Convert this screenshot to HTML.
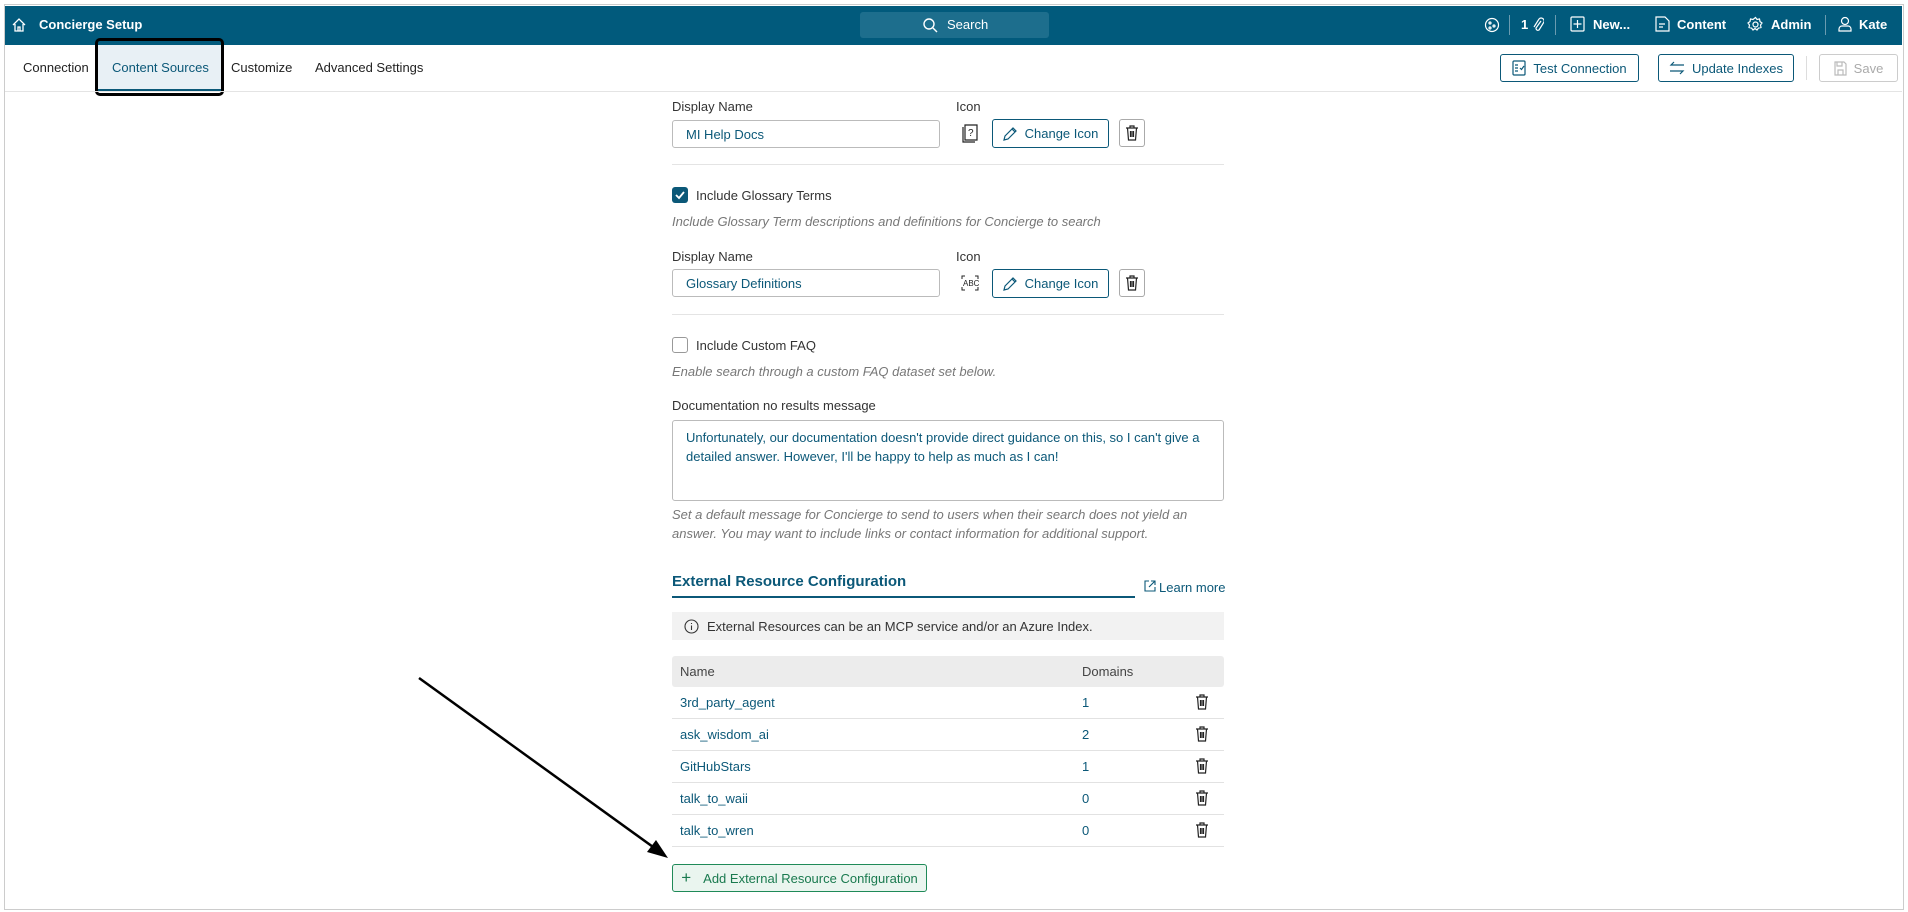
<!DOCTYPE html>
<html><head><meta charset="utf-8"><style>
*{box-sizing:border-box;margin:0;padding:0}
body{width:1908px;height:912px;background:#fff;font-family:"Liberation Sans",sans-serif;font-size:13px;color:#222;position:relative;overflow:hidden}
.a{position:absolute;white-space:nowrap}
.top{left:5px;top:6px;width:1897px;height:39px;background:#015a7c}
.w{color:#fff}
.btn{position:absolute;border:1px solid #0b5878;border-radius:3px;color:#0b5878;display:flex;align-items:center;justify-content:center;gap:7px;background:#fff}
.inp{position:absolute;border:1px solid #bbb;border-radius:3px;color:#0b5878;padding-left:13px;display:flex;align-items:center}
.lbl{color:#333}
.it{color:#777;font-style:italic}
.div{position:absolute;left:672px;width:552px;height:1px;background:#e4e4e4}
.tr{border:1px solid #aaa;border-radius:3px;position:absolute;width:26px;height:28px;display:flex;align-items:center;justify-content:center}
.row{position:absolute;left:672px;width:552px;height:32px;border-bottom:1px solid #e2e2e2}
.row span{position:absolute;top:8px;color:#0b5878}
</style></head><body>
<div class="a" style="left:4px;top:4px;width:1900px;height:906px;border:1px solid #ccc"></div>
<div class="a top"></div>
<svg class="a" style="left:11px;top:17px" width="16" height="16" viewBox="0 0 16 16" fill="none" stroke="#fff" stroke-width="1.3"><path d="M2 8L8 2l6 6M4 7v7h8V7M7 14v-4h2v4"/></svg>
<div class="a w" style="left:39px;top:17px;font-weight:bold;font-size:13px">Concierge Setup</div>
<div class="a" style="left:860px;top:12px;width:189px;height:26px;background:#1d6e8d;border-radius:3px"></div>
<svg class="a" style="left:922px;top:17px" width="16" height="16" viewBox="0 0 16 16" fill="none" stroke="#fff" stroke-width="1.4"><circle cx="7" cy="7" r="5"/><path d="M11 11l4 4"/></svg>
<div class="a w" style="left:947px;top:17px">Search</div>
<svg class="a" style="left:1484px;top:17px" width="16" height="16" viewBox="0 0 16 16" fill="none" stroke="#fff" stroke-width="1.2"><circle cx="8" cy="8" r="6.5"/><circle cx="6" cy="6" r="1"/><circle cx="10" cy="9" r="1"/><circle cx="6" cy="11" r="1"/></svg>
<div class="a" style="left:1509px;top:15px;width:1px;height:20px;background:#6a9bb0"></div>
<div class="a w" style="left:1521px;top:17px;font-weight:bold">1</div>
<svg class="a" style="left:1532px;top:16px" width="12" height="17" viewBox="0 0 12 17" fill="none" stroke="#fff" stroke-width="1.2"><path d="M9 5l-5 7a2 2 0 003 2l5-8a3 3 0 00-5-3L2 11"/></svg>
<div class="a" style="left:1555px;top:15px;width:1px;height:20px;background:#6a9bb0"></div>
<svg class="a" style="left:1570px;top:16px" width="15" height="16" viewBox="0 0 15 16" fill="none" stroke="#fff" stroke-width="1.2"><rect x="1" y="1" width="13" height="14" rx="1"/><path d="M7.5 4v8M3.5 8h8"/></svg>
<div class="a w" style="left:1593px;top:17px;font-weight:bold">New...</div>
<svg class="a" style="left:1655px;top:16px" width="15" height="16" viewBox="0 0 15 16" fill="none" stroke="#fff" stroke-width="1.2"><path d="M1 1h9l4 4v10H1zM4 8h6M4 11h4"/></svg>
<div class="a w" style="left:1677px;top:17px;font-weight:bold">Content</div>
<svg class="a" style="left:1747px;top:16px" width="17" height="17" viewBox="0 0 17 17" fill="none" stroke="#fff" stroke-width="1.2"><circle cx="8.5" cy="8.5" r="2.5"/><path d="M8.5 1.5l1.5 2 2.5-.5.5 2.5 2 1.5-1.5 2 .5 2.5-2.5.5-1.5 2-2-1.5-2 1.5-1.5-2-2.5-.5.5-2.5-1.5-2 2-1.5.5-2.5 2.5.5z"/></svg>
<div class="a w" style="left:1771px;top:17px;font-weight:bold">Admin</div>
<div class="a" style="left:1825px;top:15px;width:1px;height:20px;background:#6a9bb0"></div>
<svg class="a" style="left:1838px;top:16px" width="14" height="16" viewBox="0 0 14 16" fill="none" stroke="#fff" stroke-width="1.2"><circle cx="7" cy="5" r="3.5"/><path d="M1 15v-2a3 3 0 013-3h6a3 3 0 013 3v2z"/></svg>
<div class="a w" style="left:1859px;top:17px;font-weight:bold">Kate</div>

<div class="a" style="left:97px;top:45px;width:124px;height:46px;background:#e8f0f5;border-bottom:2px solid #0b5878"></div>
<div class="a" style="left:95px;top:38px;width:129px;height:58px;border:3px solid #000;border-radius:5px"></div>
<div class="a" style="left:23px;top:60px">Connection</div>
<div class="a" style="left:112px;top:60px;color:#0b5878">Content Sources</div>
<div class="a" style="left:231px;top:60px">Customize</div>
<div class="a" style="left:315px;top:60px">Advanced Settings</div>
<div class="a" style="left:5px;top:91px;width:1897px;height:1px;background:#e4e4e4"></div>
<div class="btn" style="left:1500px;top:54px;width:139px;height:28px"><svg width="14" height="16" viewBox="0 0 14 16" fill="none" stroke="#0b5878" stroke-width="1.2"><rect x="1" y="1" width="12" height="14" rx="1"/><path d="M3 5h3M3 8h3M3 11h3M8 8l1.5 1.5L12 6"/></svg>Test Connection</div>
<div class="btn" style="left:1658px;top:54px;width:136px;height:28px"><svg width="16" height="14" viewBox="0 0 16 14" fill="none" stroke="#0b5878" stroke-width="1.2"><path d="M15 4H2l3-3M1 10h13l-3 3"/></svg>Update Indexes</div>
<div class="a" style="left:1806px;top:56px;width:1px;height:24px;background:#ddd"></div>
<div class="btn" style="left:1819px;top:54px;width:79px;height:28px;border-color:#ccc;color:#aaa"><svg width="13" height="15" viewBox="0 0 13 15" fill="none" stroke="#bbb" stroke-width="1.2"><path d="M1 1h9l2 2v11H1zM4 14V9h5v5M3 1v4h5V1"/></svg>Save</div>

<div class="a lbl" style="left:672px;top:99px">Display Name</div>
<div class="a lbl" style="left:956px;top:99px">Icon</div>
<div class="inp" style="left:672px;top:120px;width:268px;height:28px">MI Help Docs</div>
<svg class="a" style="left:962px;top:124px" width="16" height="19" viewBox="0 0 16 19" fill="none" stroke="#222" stroke-width="1.2"><path d="M3 1h12v15H3zM1 3v15h12"/><text x="6" y="12" font-size="10" fill="#222" stroke="none" font-family="Liberation Sans">?</text></svg>
<div class="btn" style="left:992px;top:119px;width:117px;height:29px"><svg width="15" height="15" viewBox="0 0 15 15" fill="none" stroke="#0b5878" stroke-width="1.2"><path d="M1 14l1-4 8-8 3 3-8 8zM9 3l3 3"/></svg>Change Icon</div>
<div class="tr" style="left:1119px;top:119px"><svg width="14" height="16" viewBox="0 0 14 16" fill="none" stroke="#222" stroke-width="1.2"><path d="M1 3h12M5 3V1h4v2M2.5 3l1 12h7l1-12M5.5 6v6M7 6v6M8.5 6v6"/></svg></div>
<div class="div" style="top:164px"></div>
<div class="a" style="left:672px;top:187px;width:16px;height:16px;background:#0b5878;border-radius:3px"><svg width="16" height="16" viewBox="0 0 16 16" fill="none" stroke="#fff" stroke-width="1.8"><path d="M4 8l3 3 5-6"/></svg></div>
<div class="a lbl" style="left:696px;top:188px">Include Glossary Terms</div>
<div class="a it" style="left:672px;top:214px">Include Glossary Term descriptions and definitions for Concierge to search</div>
<div class="a lbl" style="left:672px;top:249px">Display Name</div>
<div class="a lbl" style="left:956px;top:249px">Icon</div>
<div class="inp" style="left:672px;top:269px;width:268px;height:28px">Glossary Definitions</div>
<svg class="a" style="left:961px;top:275px" width="18" height="16" viewBox="0 0 18 16" fill="none" stroke="#222" stroke-width="1"><path d="M1 4V1h3M14 1h3v3M1 12v3h3M14 15h3v-3"/><text x="2" y="11" font-size="8" fill="#222" stroke="none" font-family="Liberation Sans">ABC</text></svg>
<div class="btn" style="left:992px;top:269px;width:117px;height:29px"><svg width="15" height="15" viewBox="0 0 15 15" fill="none" stroke="#0b5878" stroke-width="1.2"><path d="M1 14l1-4 8-8 3 3-8 8zM9 3l3 3"/></svg>Change Icon</div>
<div class="tr" style="left:1119px;top:269px"><svg width="14" height="16" viewBox="0 0 14 16" fill="none" stroke="#222" stroke-width="1.2"><path d="M1 3h12M5 3V1h4v2M2.5 3l1 12h7l1-12M5.5 6v6M7 6v6M8.5 6v6"/></svg></div>
<div class="div" style="top:314px"></div>
<div class="a" style="left:672px;top:337px;width:16px;height:16px;border:1px solid #999;border-radius:3px"></div>
<div class="a lbl" style="left:696px;top:338px">Include Custom FAQ</div>
<div class="a it" style="left:672px;top:364px">Enable search through a custom FAQ dataset set below.</div>
<div class="a lbl" style="left:672px;top:398px">Documentation no results message</div>
<div class="a" style="left:672px;top:420px;width:552px;height:81px;border:1px solid #bbb;border-radius:3px;color:#0b5878;padding:7px 13px;white-space:normal;line-height:19px">Unfortunately, our documentation doesn't provide direct guidance on this, so I can't give a detailed answer. However, I'll be happy to help as much as I can!</div>
<div class="a it" style="left:672px;top:505px;line-height:19px">Set a default message for Concierge to send to users when their search does not yield an<br>answer. You may want to include links or contact information for additional support.</div>
<div class="a" style="left:672px;top:573px;font-weight:bold;font-size:15px;color:#0b5878">External Resource Configuration</div>
<div class="a" style="left:672px;top:596px;width:463px;height:2px;background:#0b5878"></div>
<svg class="a" style="left:1144px;top:580px" width="12" height="12" viewBox="0 0 12 12" fill="none" stroke="#0b5878" stroke-width="1.1"><path d="M5 1H1v10h10V7M7 1h4v4M11 1L5 7"/></svg>
<div class="a" style="left:1159px;top:580px;color:#0b5878">Learn more</div>
<div class="a" style="left:672px;top:612px;width:552px;height:28px;background:#f2f2f2"></div>
<svg class="a" style="left:684px;top:619px" width="15" height="15" viewBox="0 0 15 15" fill="none" stroke="#333" stroke-width="1.1"><circle cx="7.5" cy="7.5" r="6.5"/><path d="M7.5 6.5v4.5M7.5 4v1"/></svg>
<div class="a" style="left:707px;top:619px;color:#333">External Resources can be an MCP service and/or an Azure Index.</div>
<div class="a" style="left:672px;top:656px;width:552px;height:31px;background:#ececec;border-radius:3px"></div>
<div class="a" style="left:680px;top:664px;color:#444">Name</div>
<div class="a" style="left:1082px;top:664px;color:#444">Domains</div>
<div class="row" style="top:687px"><span style="left:8px">3rd_party_agent</span><span style="left:410px">1</span></div>
<div class="row" style="top:719px"><span style="left:8px">ask_wisdom_ai</span><span style="left:410px">2</span></div>
<div class="row" style="top:751px"><span style="left:8px">GitHubStars</span><span style="left:410px">1</span></div>
<div class="row" style="top:783px"><span style="left:8px">talk_to_waii</span><span style="left:410px">0</span></div>
<div class="row" style="top:815px"><span style="left:8px">talk_to_wren</span><span style="left:410px">0</span></div>
<svg class="a" style="left:1195px;top:694px" width="14" height="150" viewBox="0 0 14 150" fill="none" stroke="#222" stroke-width="1.2"><g id="t"><path d="M1 3h12M5 3V1h4v2M2.5 3l1 12h7l1-12M5.5 6v6M7 6v6M8.5 6v6"/></g><g transform="translate(0,32)"><path d="M1 3h12M5 3V1h4v2M2.5 3l1 12h7l1-12M5.5 6v6M7 6v6M8.5 6v6"/></g><g transform="translate(0,64)"><path d="M1 3h12M5 3V1h4v2M2.5 3l1 12h7l1-12M5.5 6v6M7 6v6M8.5 6v6"/></g><g transform="translate(0,96)"><path d="M1 3h12M5 3V1h4v2M2.5 3l1 12h7l1-12M5.5 6v6M7 6v6M8.5 6v6"/></g><g transform="translate(0,128)"><path d="M1 3h12M5 3V1h4v2M2.5 3l1 12h7l1-12M5.5 6v6M7 6v6M8.5 6v6"/></g></svg>
<div class="btn" style="left:672px;top:864px;width:255px;height:28px;border-color:#1f8a58;color:#1a7a4f;background:#eaf5ef;gap:12px"><span style="font-size:17px;font-weight:300">+</span>Add External Resource Configuration</div>
<svg class="a" style="left:0;top:0" width="1908" height="912"><line x1="419" y1="678" x2="660" y2="852" stroke="#000" stroke-width="2.5"/><path d="M668 858L647 852l9-12z" fill="#000"/></svg>
</body></html>
